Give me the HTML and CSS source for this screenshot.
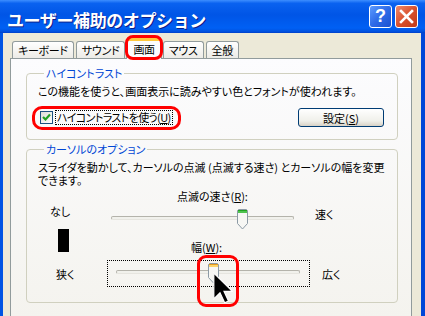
FILE: index.html
```html
<!DOCTYPE html>
<html lang="ja">
<head>
	<meta charset="utf-8">
	<title>ユーザー補助のオプション</title>
	<link rel="stylesheet" href="styles.css">
</head>
<body>
	<div class="window">
		<div class="titlebar">
			<span class="title">ユーザー補助のオプション</span>
			<div class="caption-buttons">
				<div class="cap help">?</div>
				<div class="cap close">
					<svg width="15" height="15" viewBox="0 0 15 15">
						<path d="M2 2L13 13M13 2L2 13" stroke="#fff" stroke-width="2.6" stroke-linecap="square"/>
					</svg>
				</div>
			</div>
		</div>

		<div class="client">
			<div class="tabs">
				<div class="tab">キーボード</div>
				<div class="tab">サウンド</div>
				<div class="tab active">画面</div>
				<div class="tab">マウス</div>
				<div class="tab">全般</div>
			</div>

			<div class="panel">
				<fieldset class="group">
					<legend>ハイコントラスト</legend>
					<p class="desc">この機能を使うと、画面表示に読みやすい色とフォントが使われます。</p>
					<div class="hc-row">
						<div class="hc-check">
							<span class="check">
								<svg width="11" height="11" viewBox="0 0 11 11">
									<path d="M2 5L4.5 7.5L9 2.5" fill="none" stroke="#21A121" stroke-width="2.2"/>
								</svg>
							</span>
							<span class="check-label">ハイコントラストを使う(<u>U</u>)</span>
						</div>
						<button class="btn">設定(<u>S</u>)</button>
					</div>
				</fieldset>

				<fieldset class="group cursor-group">
					<legend>カーソルのオプション</legend>
					<p class="desc">スライダを動かして、カーソルの点滅 (点滅する速さ) とカーソルの幅を変更<br>できます。</p>

					<div class="row row-label">
						<span class="rate-label">点滅の速さ(<u>R</u>):</span>
					</div>
					<div class="row row-rate">
						<span class="end-left">なし</span>
						<div class="slider">
							<div class="track"></div>
							<svg class="thumb thumb-rate" width="11" height="21" viewBox="0 0 11 21">
								<path d="M1.5 .5h8l1 1v13l-5 5.5-5-5.5v-13z" fill="#F7F7F4" stroke="#8C9AA5"/>
								<path d="M1 1h9v1H1z" fill="#21A121"/>
								<path d="M1 2h9v2H1z" fill="#4FC34F"/>
							</svg>
						</div>
						<span class="end-right">速く</span>
					</div>
					<div class="row row-width-label">
						<div class="caret-sample"></div>
						<span class="width-label">幅(<u>W</u>):</span>
					</div>
					<div class="row row-width">
						<span class="end-left narrow">狭く</span>
						<div class="slider focused">
							<div class="track"></div>
							<svg class="thumb thumb-width" width="11" height="21" viewBox="0 0 11 21">
								<path d="M1.5 .5h8l1 1v13l-5 5.5-5-5.5v-13z" fill="#F7F7F4" stroke="#8C9AA5"/>
								<path d="M1 1h9v1H1z" fill="#E59A1E"/>
								<path d="M1 2h9v2H1z" fill="#FBD36A"/>
							</svg>
							<span class="mark"></span>
							<svg class="pointer" width="20" height="32" viewBox="0 0 12 19">
								<path d="M.5 .5V16L4.2 12.4L7 18.3L9.3 17.3L6.6 11.5H11.6Z" fill="#000" stroke="#fff" stroke-width=".7"/>
							</svg>
						</div>
						<span class="end-right wide">広く</span>
					</div>
				</fieldset>
			</div>
		</div>
	</div>
</body>
</html>
```

FILE: styles.css
```css
body {
	margin: 0;
	background: #ECE9D8;
	font-family: "Noto Sans CJK JP", "Liberation Sans", sans-serif;
	font-size: 11px;
	font-feature-settings: "palt";
	color: #000;
	overflow: hidden;
}

.window {
	width: 425px;
	height: 316px;
	overflow: hidden;
}

/* title bar */
.titlebar {
	height: 33px;
	box-sizing: border-box;
	display: flex;
	align-items: center;
	justify-content: space-between;
	padding: 0 7px 0 7px;
	background: linear-gradient(#3D8EFF 0%, #0A62F0 10%, #0055E6 45%, #0060F4 85%, #0052E0 95%, #003FC8 100%);
}

.title {
	color: #fff;
	font-size: 17px;
	font-weight: bold;
	letter-spacing: -0.4px;
	font-feature-settings: normal;
	text-shadow: 1px 1px #0B1E8A;
	padding-top: 5px;
}

.caption-buttons {
	display: flex;
	gap: 3px;
}

.cap {
	width: 23px;
	height: 23px;
	box-sizing: border-box;
	border: 1px solid #fff;
	border-radius: 3px;
	display: flex;
	align-items: center;
	justify-content: center;
}

.help {
	background: linear-gradient(135deg, #5C9BFF 0%, #2E6BE8 50%, #1C50D0 100%);
	color: #fff;
	font-family: "Liberation Sans", sans-serif;
	font-weight: bold;
	font-size: 18px;
}

.close {
	background: linear-gradient(135deg, #EE8A6C 0%, #D9512E 50%, #C03A17 100%);
}

/* client area */
.client {
	height: 283px;
	box-sizing: border-box;
	border-left: 3px solid #0054E3;
	border-right: 4px solid #0046D8;
	padding: 5px 9px 0 7px;
}

.tabs {
	display: flex;
	align-items: flex-end;
	gap: 2px;
	height: 21px;
	padding-left: 2px;
	margin-bottom: -1px;
	position: relative;
	z-index: 1;
}

.tab {
	height: 17px;
	box-sizing: border-box;
	margin-bottom: 1px;
	padding: 0 5px;
	border: 1px solid #919B9C;
	border-bottom: none;
	border-radius: 3px 3px 0 0;
	background: linear-gradient(#FFFFFF, #ECEBE6);
	letter-spacing: -0.3px;
	line-height: 16px;
}

.tab.active {
	position: relative;
	height: 21px;
	margin: 0 -1px 0 -1px;
	padding: 0 6px;
	background: #FCFCFE;
	border-top: 3px solid #FFC83C;
	line-height: 17px;
}

.tab.active::after {
	content: "";
	position: absolute;
	top: -6px;
	left: -2px;
	right: -2px;
	bottom: -1px;
	border: 3px solid #F00;
	border-radius: 8px;
}

.panel {
	height: 262px;
	box-sizing: border-box;
	border: 1px solid #919B9C;
	background: linear-gradient(#FCFCFE, #F4F3EE);
	padding: 8px 13px 0 15px;
}

/* group boxes */
.group {
	min-width: 0;
	margin: 0;
	padding: 0 13px 12px 11px;
	border: 1px solid #D0D0BF;
	border-radius: 4px;
}

.group legend {
	margin-left: 6px;
	padding: 0 2px;
	color: #0046D5;
	line-height: 12px;
}

.desc {
	margin: 6px 0 0;
	line-height: 13px;
	white-space: nowrap;
}

.hc-row {
	display: flex;
	align-items: center;
	justify-content: space-between;
	margin-top: 10px;
}

.hc-check {
	display: flex;
	align-items: center;
	position: relative;
	margin-left: 2px;
}

.hc-check::after {
	content: "";
	position: absolute;
	top: -5px;
	left: -8px;
	right: -9px;
	bottom: -6px;
	border: 3px solid #F00;
	border-radius: 10px;
}

.check {
	width: 13px;
	height: 13px;
	box-sizing: border-box;
	border: 1px solid #1C5180;
	background: linear-gradient(135deg, #DCDCD6, #FFFFFF);
	display: flex;
	align-items: center;
	justify-content: center;
}

.check-label {
	margin-left: 3px;
	padding: 0 1px;
	line-height: 13px;
	letter-spacing: -0.6px;
	outline: 1px dotted #000;
}

.btn {
	width: 86px;
	height: 19px;
	padding: 0;
	border: 1px solid #003C74;
	border-radius: 3px;
	background: linear-gradient(#FFFFFF, #F0F0EA 70%, #D8D2C6);
	font: inherit;
	line-height: 16px;
}

/* cursor options */
.cursor-group {
	margin-top: 3px;
	padding-bottom: 10px;
}

.row {
	display: flex;
}

.row-label {
	height: 16px;
	align-items: flex-end;
}

.rate-label {
	margin-left: 139px;
	line-height: 13px;
}

.row-rate {
	height: 26px;
}

.end-left {
	width: 69px;
	box-sizing: border-box;
	padding-left: 12px;
	line-height: 13px;
	margin-top: 2px;
}

.end-right {
	margin-left: 5px;
	margin-top: 5px;
	line-height: 13px;
}

.slider {
	width: 203px;
	height: 26px;
	box-sizing: border-box;
	position: relative;
}

.track {
	width: 183px;
	height: 4px;
	box-sizing: border-box;
	margin: 13px 0 0 4px;
	border: 1px solid #B4B3AB;
	border-bottom-color: #E6E5DF;
	border-radius: 2px;
	background: #F1F1EC;
}

.thumb {
	position: absolute;
}

.thumb-rate {
	left: 130px;
	top: 6px;
}

.row-width-label {
	height: 28px;
}

.caret-sample {
	width: 11px;
	height: 23px;
	margin-left: 20px;
	background: #000;
}

.width-label {
	margin-left: 122px;
	margin-top: 12px;
	line-height: 13px;
}

.row-width {
	height: 32px;
	padding-top: 3px;
}

.end-left.narrow {
	padding-left: 18px;
	margin-top: 8px;
}

.slider.focused {
	height: 27px;
	outline: 1px dotted #000;
	outline-offset: -1px;
}

.slider.focused .track {
	width: 184px;
	margin: 10px 0 0 9px;
}

.thumb-width {
	left: 101px;
	top: 3px;
}

.mark {
	position: absolute;
	left: 90px;
	top: -5px;
	width: 42px;
	height: 52px;
	box-sizing: border-box;
	border: 3px solid #F00;
	border-radius: 9px;
}

.pointer {
	position: absolute;
	left: 106px;
	top: 12px;
}

.end-right.wide {
	margin-left: 12px;
	margin-top: 8px;
}
```
